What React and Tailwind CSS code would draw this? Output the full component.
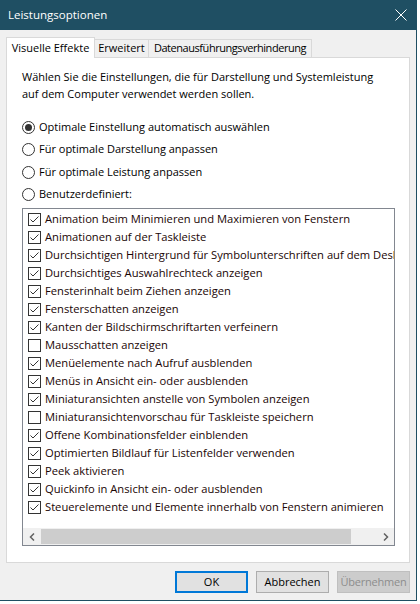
import React from "react";

const items = [
  ["Animation beim Minimieren und Maximieren von Fenstern", true],
  ["Animationen auf der Taskleiste", true],
  ["Durchsichtigen Hintergrund für Symbolunterschriften auf dem Desktop verwenden", true],
  ["Durchsichtiges Auswahlrechteck anzeigen", true],
  ["Fensterinhalt beim Ziehen anzeigen", true],
  ["Fensterschatten anzeigen", true],
  ["Kanten der Bildschirmschriftarten verfeinern", true],
  ["Mausschatten anzeigen", false],
  ["Menüelemente nach Aufruf ausblenden", true],
  ["Menüs in Ansicht ein- oder ausblenden", true],
  ["Miniaturansichten anstelle von Symbolen anzeigen", true],
  ["Miniaturansichtenvorschau für Taskleiste speichern", false],
  ["Offene Kombinationsfelder einblenden", true],
  ["Optimierten Bildlauf für Listenfelder verwenden", true],
  ["Peek aktivieren", true],
  ["Quickinfo in Ansicht ein- oder ausblenden", true],
  ["Steuerelemente und Elemente innerhalb von Fenstern animieren", true],
];

function Radio({ checked, label, h }) {
  return (
    <div className={`flex items-center ${h}`}>
      <div className="w-[13px] h-[13px] rounded-full border border-[#333333] bg-white flex items-center justify-center shrink-0">
        {checked && <div className="w-[7px] h-[7px] rounded-full bg-[#333333]" />}
      </div>
      <span className="ml-[4px]">{label}</span>
    </div>
  );
}

function Check({ checked }) {
  return (
    <div className="w-[13px] h-[13px] border border-[#333333] bg-white shrink-0 flex items-center justify-center">
      {checked && (
        <svg width="11" height="11" viewBox="0 0 11 11">
          <polyline points="1.5,5.5 4,8 9.5,2.5" fill="none" stroke="#333333" strokeWidth="1" />
        </svg>
      )}
    </div>
  );
}

export default function App() {
  return (
    <div
      className="w-[420px] h-[604px] bg-white text-[11px] text-black"
      style={{ fontFamily: '"Open Sans", "Noto Sans", sans-serif' }}
    >
      <div className="w-[417px] h-[601px] bg-[#f0f0f0] border-r border-b border-[#1f4f63] flex flex-col">
        <div className="h-[30px] bg-[#1f4f63] text-white flex items-center justify-between pl-[8px] pr-[9px] shrink-0">
          <span className="text-[11.5px]">Leistungsoptionen</span>
          <svg width="12" height="12" viewBox="0 0 12 12">
            <path d="M0.5 0.5 L11.5 11.5 M11.5 0.5 L0.5 11.5" stroke="white" strokeWidth="1" />
          </svg>
        </div>

        <div className="px-[6px] mt-[7px] flex flex-col">
          <div className="flex items-end h-[20px]">
            <div className="relative z-10 h-[21px] -mb-px w-[89px] bg-white border border-b-0 border-[#d9d9d9] flex items-center justify-center">
              Visuelle Effekte
            </div>
            <div className="h-[18px] w-[54px] border-t border-r border-[#d9d9d9] flex items-center justify-center">
              Erweitert
            </div>
            <div className="h-[18px] w-[163px] border-t border-r border-[#d9d9d9] flex items-center justify-center whitespace-nowrap tracking-[-0.45px]">
              Datenausführungsverhinderung
            </div>
          </div>

          <div className="h-[506px] bg-white border border-[#d9d9d9] pl-[15px] pt-[10px] flex flex-col">
            <div className="leading-[17px]">
              <div>Wählen Sie die Einstellungen, die für Darstellung und Systemleistung</div>
              <div>auf dem Computer verwendet werden sollen.</div>
            </div>
            <div className="mt-[14px] flex flex-col">
              <Radio checked label="Optimale Einstellung automatisch auswählen" h="h-[22px]" />
              <Radio label="Für optimale Darstellung anpassen" h="h-[23px]" />
              <Radio label="Für optimale Leistung anpassen" h="h-[22px]" />
              <Radio label="Benutzerdefiniert:" h="h-[23px]" />
            </div>

            <div className="mt-[2px] w-[373px] h-[338px] border border-[#828790] flex flex-col">
              <div className="flex-1 overflow-hidden pt-[1px] text-[11.2px]">
                {items.map(([label, on]) => (
                  <div key={label} className="h-[18px] flex items-center pl-[5px] whitespace-nowrap text-[#1a0505]">
                    <Check checked={on} />
                    <span className="ml-[4px]">{label}</span>
                  </div>
                ))}
              </div>
              <div className="h-[17px] bg-[#f0f0f0] flex items-stretch shrink-0">
                <div className="w-[17px] flex items-center justify-center">
                  <svg width="6" height="8" viewBox="0 0 6 8">
                    <polyline points="5,0.5 1.5,4 5,7.5" fill="none" stroke="#606060" strokeWidth="1.5" />
                  </svg>
                </div>
                <div className="flex-1 py-[1px] pl-[1px]">
                  <div className="h-full w-[310px] bg-[#cdcdcd]" />
                </div>
                <div className="w-[17px] flex items-center justify-center">
                  <svg width="6" height="8" viewBox="0 0 6 8">
                    <polyline points="1,0.5 4.5,4 1,7.5" fill="none" stroke="#606060" strokeWidth="1.5" />
                  </svg>
                </div>
              </div>
            </div>
          </div>

          <div className="mt-[8px] flex justify-end gap-[8px]">
            <div className="w-[73px] h-[22px] bg-[#e1e1e1] border-2 border-[#0078d7] flex items-center justify-center">
              OK
            </div>
            <div className="w-[73px] h-[22px] bg-[#e1e1e1] border border-[#adadad] flex items-center justify-center">
              Abbrechen
            </div>
            <div className="w-[73px] h-[22px] bg-[#cccccc] border border-[#bfbfbf] text-[#8c8c8c] flex items-center justify-center tracking-[-0.2px]">
              Übernehmen
            </div>
          </div>
        </div>
      </div>
    </div>
  );
}
